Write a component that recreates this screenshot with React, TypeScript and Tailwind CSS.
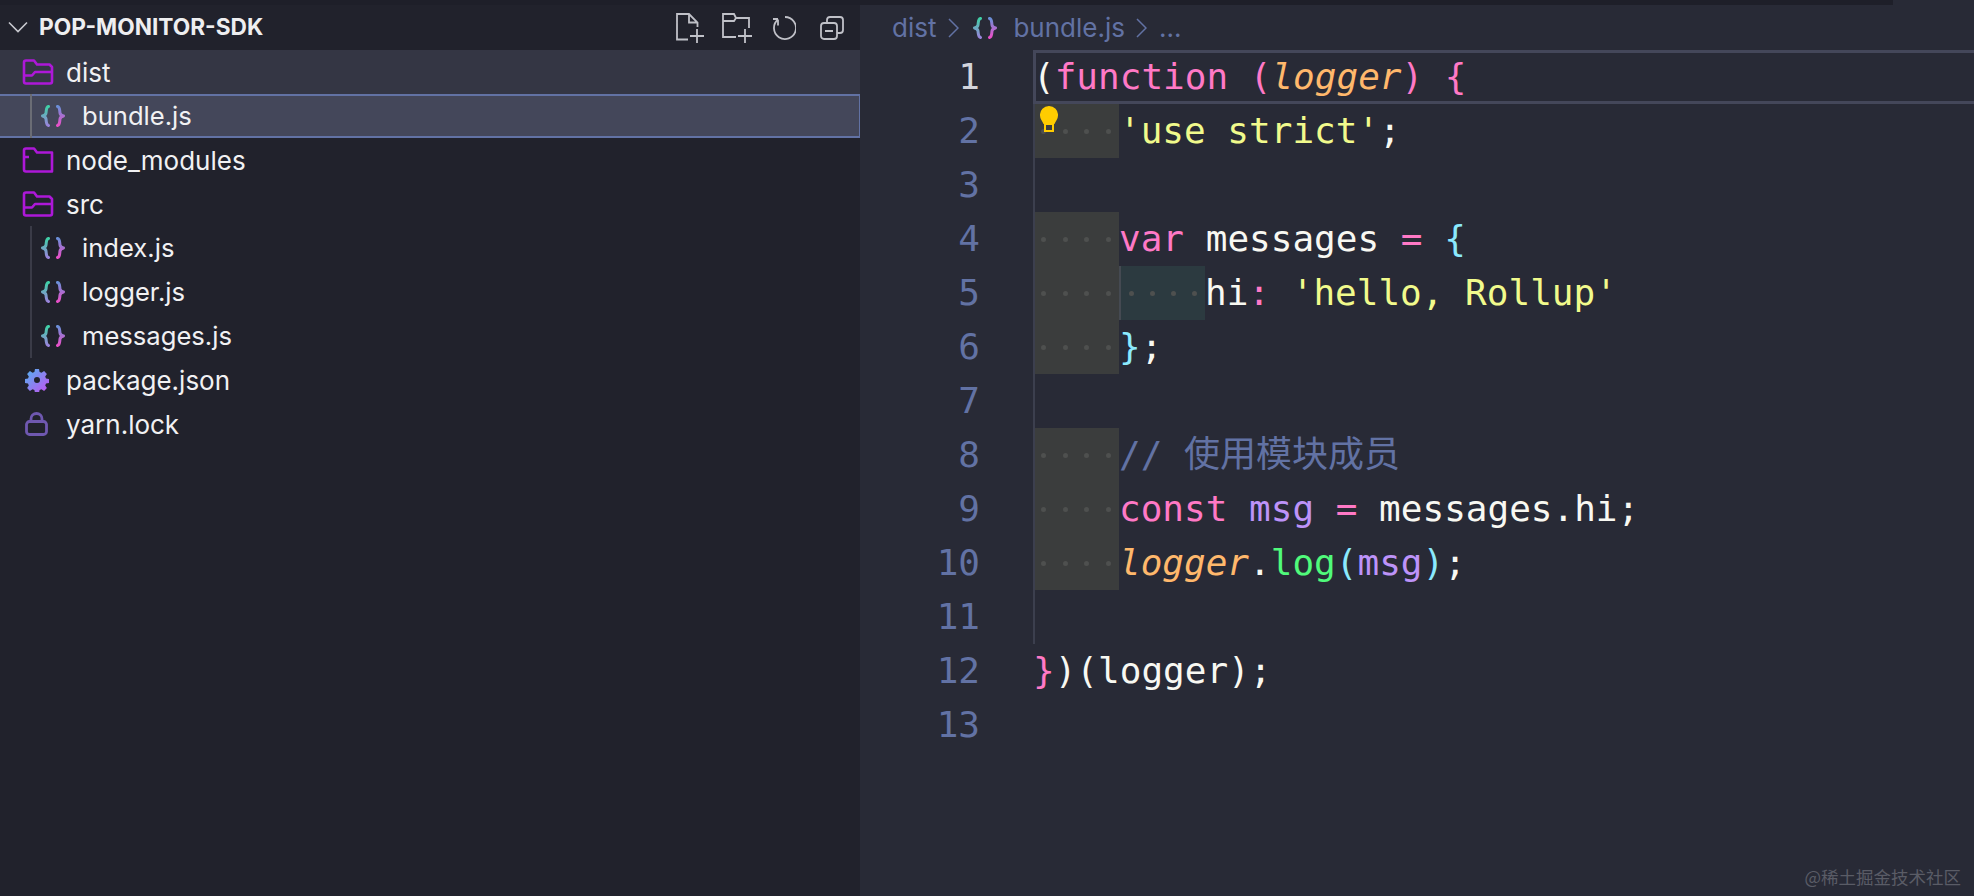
import type { ReactNode } from "react";

const sans = "font-['Inter','Noto_Sans',sans-serif]";
const mono = "font-['DejaVu_Sans_Mono','Noto_Sans_CJK_SC',monospace]";

function FolderIcon({ open }: { open?: boolean }) {
  return (
    <svg width="32" height="26" viewBox="0 0 32 26" fill="none" stroke="#ad18d8" strokeWidth="2.6" strokeLinejoin="round">
      {open ? (
        <path d="M2 3.5C2 2 2.6 1.5 4 1.5H12L15 5.5H27.5L30 8V22.5C30 24 29.5 24.5 28 24.5H4C2.6 24.5 2 24 2 22.5ZM2 16.5H10L13 13H30" />
      ) : (
        <path d="M2 3.5C2 2 2.6 1.5 4 1.5H12L15 5.5H30V24.5H4C2.6 24.5 2 24 2 22.5ZM2 10H7" />
      )}
    </svg>
  );
}

function BracesIcon({ id }: { id: string }) {
  return (
    <svg width="24" height="22" viewBox="0 0 24 22" fill="none" strokeWidth="3" strokeLinecap="round" strokeLinejoin="round">
      <defs>
        <linearGradient id={id + "l"} x1="0" y1="0" x2="0" y2="1">
          <stop offset="0" stopColor="#3fd0a6" />
          <stop offset="1" stopColor="#9a84dc" />
        </linearGradient>
        <linearGradient id={id + "r"} x1="0" y1="0" x2="0" y2="1">
          <stop offset="0" stopColor="#6a8fd8" />
          <stop offset="1" stopColor="#ea4fc8" />
        </linearGradient>
      </defs>
      <path stroke={`url(#${id}l)`} d="M7.5 1.5C5 2 5.5 4.5 5 8C4.8 9.5 3.5 10.5 1.5 11C3.5 11.5 4.8 12.5 5 14C5.5 17.5 5 20 7.5 20.5" />
      <path stroke={`url(#${id}r)`} d="M16.5 1.5C19 2 18.5 4.5 19 8C19.2 9.5 20.5 10.5 22.5 11C20.5 11.5 19.2 12.5 19 14C18.5 17.5 19 20 16.5 20.5" />
    </svg>
  );
}

function GearIcon() {
  return (
    <svg className="ml-[3px]" width="24" height="24" viewBox="0 0 24 24">
      <defs>
        <linearGradient id="gear" x1="0" y1="0" x2="1" y2="1">
          <stop offset="0" stopColor="#4fb4f0" />
          <stop offset="1" stopColor="#c74ff0" />
        </linearGradient>
      </defs>
      <path
        fill="url(#gear)"
        fillRule="evenodd"
        d="M10 1h4l.6 3 1.9.8 2.6-1.7 2.8 2.8-1.7 2.6.8 1.9 3 .6v4l-3 .6-.8 1.9 1.7 2.6-2.8 2.8-2.6-1.7-1.9.8-.6 3h-4l-.6-3-1.9-.8-2.6 1.7-2.8-2.8 1.7-2.6-.8-1.9-3-.6v-4l3-.6.8-1.9-1.7-2.6 2.8-2.8 2.6 1.7 1.9-.8zM12 9a3 3 0 1 0 0 6 3 3 0 0 0 0-6z"
      />
    </svg>
  );
}

function LockIcon() {
  return (
    <svg className="ml-[3px]" width="23" height="24" viewBox="0 0 23 24" fill="none" stroke="#6f58b0" strokeWidth="2.8" strokeLinejoin="round">
      <rect x="1.5" y="9.5" width="20" height="13" rx="3" />
      <path d="M6 9.5V7a5.5 5.5 0 0 1 11 0V9.5" />
    </svg>
  );
}

function Row({ icon, label, nested, selected, active }: { icon: ReactNode; label: string; nested?: boolean; selected?: boolean; active?: boolean }) {
  return (
    <div
      className={
        "relative flex h-[44px] items-center " +
        (nested ? "pl-[41px] " : "pl-[22px] ") +
        (selected ? "border-y-2 border-r border-[#6272a4] bg-[#44475a] " : "") +
        (active ? "bg-[#343644] " : "")
      }
    >
      {nested && <span className={"absolute left-[30px] w-[2px] " + (selected ? "-top-[2px] -bottom-[2px] bg-[#6b6d75]" : "top-0 bottom-0 bg-[#3a3b47]")} />}
      <span className={"flex shrink-0 " + (nested ? "w-[41px]" : "w-[44px]")}>{icon}</span>
      <span className={"text-[#f1f1f3] " + (nested ? "text-[25.6px]" : "text-[26px]")}>{label}</span>
    </div>
  );
}

function GuideDots({ tint }: { tint?: boolean }) {
  return (
    <span className={"flex h-full w-[86px] shrink-0 items-center justify-between px-[8px] " + (tint ? "border-l-2 border-[#454a52] bg-[#2c3a40]" : "bg-[#3b3d3d]")}>
      <span className="size-[5px] rounded-full bg-[#4e504f]" />
      <span className="size-[5px] rounded-full bg-[#4e504f]" />
      <span className="size-[5px] rounded-full bg-[#4e504f]" />
      <span className="size-[5px] rounded-full bg-[#4e504f]" />
    </span>
  );
}

function CodeLine({ n, children, active }: { n: number; children?: ReactNode; active?: boolean }) {
  return (
    <div className="flex h-[54px]">
      <div className={"w-[120px] shrink-0 text-right " + (active ? "text-[#d2d4dc]" : "text-[#6272a4]")}>{n}</div>
      <div className={"ml-[53px] flex h-full flex-1 items-center whitespace-pre " + (active ? "border-y-[3px] border-l-[3px] border-[#44475a]" : "")}>{children}</div>
    </div>
  );
}

function Chevron({ className }: { className: string }) {
  return (
    <svg className={className} width="11" height="20" viewBox="0 0 11 20" fill="none" stroke="#6272a4" strokeWidth="1.5">
      <path d="M1 1L10 10L1 19" />
    </svg>
  );
}

export default function App() {
  return (
    <main className="flex h-[896px] w-[1974px] flex-col overflow-hidden bg-[#282a36]">
      <div className="h-[5px] w-[1893px] bg-[#1e1f29]" />
      <div className="flex min-h-0 flex-1">
        {/* sidebar */}
        <aside className={"w-[860px] shrink-0 bg-[#21222c] " + sans}>
          <div className="flex h-[45px] items-center justify-between pr-[16px] pl-[8px]">
            <div className="flex items-center gap-[11px]">
              <svg width="20" height="12" viewBox="0 0 20 12" fill="none" stroke="#c8c9cf" strokeWidth="1.6">
                <path d="M1 1.5L10 10.5L19 1.5" />
              </svg>
              <span className="text-[22.7px] leading-none font-bold text-[#eeeef0]">POP-MONITOR-SDK</span>
            </div>
            <div className="flex items-center">
              <svg width="28" height="30" viewBox="0 0 28 30" fill="none" stroke="#c0c1c8" strokeWidth="1.8">
                <path d="M12 26.5H1V1H13L21.5 9.5V14M13 1V9.5H21.5M21 16V30M14 23H28" />
              </svg>
              <svg className="ml-[18px]" width="30" height="30" viewBox="0 0 30 30" fill="none" stroke="#c0c1c8" strokeWidth="1.8">
                <path d="M14 24H1V1H12L14 5H27V15M1 8H12L14 5M23 16V30M16 23H30" />
              </svg>
              <svg className="ml-[20px]" width="24" height="24" viewBox="0 0 24 24" fill="none" stroke="#c0c1c8" strokeWidth="1.8">
                <path d="M6 3.5A11 11 0 1 0 13 1M6 3.5V9.5M1 3H6" />
              </svg>
              <svg className="ml-[24px]" width="24" height="24" viewBox="0 0 24 24" fill="none" stroke="#c0c1c8" strokeWidth="1.8">
                <rect x="1" y="7" width="16" height="16" rx="3" />
                <path d="M7 7V4Q7 1 10 1H20Q23 1 23 4V14Q23 17 20 17H17M5 15H13" />
              </svg>
            </div>
          </div>
          <Row active icon={<FolderIcon open />} label="dist" />
          <Row selected nested icon={<BracesIcon id="a" />} label="bundle.js" />
          <Row icon={<FolderIcon />} label="node_modules" />
          <Row icon={<FolderIcon open />} label="src" />
          <Row nested icon={<BracesIcon id="b" />} label="index.js" />
          <Row nested icon={<BracesIcon id="c" />} label="logger.js" />
          <Row nested icon={<BracesIcon id="d" />} label="messages.js" />
          <Row icon={<GearIcon />} label="package.json" />
          <Row icon={<LockIcon />} label="yarn.lock" />
        </aside>

        {/* editor */}
        <section className="relative min-w-0 flex-1">
          <div className={"flex h-[45px] items-center pl-[32px] text-[26px] text-[#6272a4] " + sans}>
            <span>dist</span>
            <Chevron className="mr-[14px] ml-[12px]" />
            <BracesIcon id="e" />
            <span className="ml-[16px]">bundle.js</span>
            <Chevron className="mr-[12px] ml-[11px]" />
            <span>...</span>
          </div>
          <div className={"relative text-[36px] leading-[54px] text-[#f8f8f2] " + mono}>
            <span className="absolute top-[54px] left-[173px] h-[540px] w-[2px] bg-[#3c3f4e]" />
            <CodeLine n={1} active>
              <span className="-ml-[3px]">(</span>
              <span className="text-[#ff79c6]">function (</span>
              <span className="text-[#ffb86c] italic">logger</span>
              <span className="text-[#ff79c6]">) {"{"}</span>
            </CodeLine>
            <CodeLine n={2}>
              <GuideDots />
              <span className="text-[#f1fa8c]">'use strict'</span>
              <span>;</span>
              <svg className="absolute top-[56px] left-[180px]" width="18" height="26" viewBox="0 0 18 26">
                <path fill="#ffcc00" d="M9 0a9 9 0 0 1 9 9.5c0 3.5-2.5 5.5-3.5 8.5h-11C2.5 15 0 13 0 9.5A9 9 0 0 1 9 0z" />
                <path fill="none" stroke="#ffcc00" strokeWidth="2" d="M5 18h8v7H5z" />
              </svg>
            </CodeLine>
            <CodeLine n={3} />
            <CodeLine n={4}>
              <GuideDots />
              <span className="text-[#ff79c6]">var</span>
              <span> messages </span>
              <span className="text-[#ff79c6]">=</span>
              <span className="text-[#8be9fd]"> {"{"}</span>
            </CodeLine>
            <CodeLine n={5}>
              <GuideDots />
              <GuideDots tint />
              <span>hi</span>
              <span className="text-[#ff79c6]">:</span>
              <span className="text-[#f1fa8c]"> 'hello, Rollup'</span>
            </CodeLine>
            <CodeLine n={6}>
              <GuideDots />
              <span className="text-[#8be9fd]">{"}"}</span>
              <span>;</span>
            </CodeLine>
            <CodeLine n={7} />
            <CodeLine n={8}>
              <GuideDots />
              <span className="text-[#6272a4]">// 使用模块成员</span>
            </CodeLine>
            <CodeLine n={9}>
              <GuideDots />
              <span className="text-[#ff79c6]">const</span>
              <span className="text-[#bd93f9]"> msg</span>
              <span className="text-[#ff79c6]"> =</span>
              <span> messages.hi;</span>
            </CodeLine>
            <CodeLine n={10}>
              <GuideDots />
              <span className="text-[#ffb86c] italic">logger</span>
              <span>.</span>
              <span className="text-[#50fa7b]">log</span>
              <span className="text-[#8be9fd]">(</span>
              <span className="text-[#bd93f9]">msg</span>
              <span className="text-[#8be9fd]">)</span>
              <span>;</span>
            </CodeLine>
            <CodeLine n={11} />
            <CodeLine n={12}>
              <span className="text-[#ff79c6]">{"}"}</span>
              <span>)(logger);</span>
            </CodeLine>
            <CodeLine n={13} />
          </div>
          <span className="absolute right-[13px] bottom-[6px] font-['Noto_Sans_CJK_SC',sans-serif] text-[17.5px] text-[#5a5c66]">@稀土掘金技术社区</span>
        </section>
      </div>
    </main>
  );
}
